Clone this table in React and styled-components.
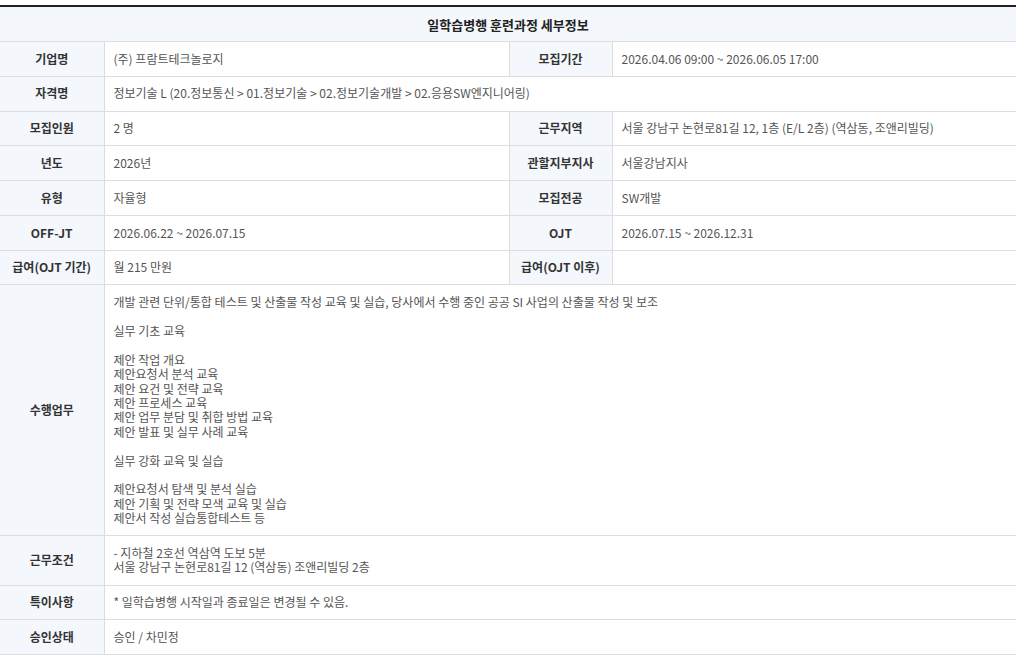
import React from 'react';
import styled, { createGlobalStyle } from 'styled-components';

const GlobalStyle = createGlobalStyle`
  html, body {
    margin: 0;
    padding: 0;
    background: #fff;
  }
  body {
    font-family: "Noto Sans CJK KR", "Noto Sans", sans-serif;
    font-size: 12px;
    color: #555;
  }
`;

const Page = styled.div`
  padding-top: 5px;
  width: 1016px;
`;

const Table = styled.table`
  width: 100%;
  border-collapse: collapse;
  table-layout: fixed;
  border-top: 2px solid #222;
`;

const Caption = styled.th`
  background: #f4f7fc;
  color: #222;
  font-size: 13px;
  font-weight: 700;
  height: 34px;
  padding: 0;
  border-bottom: 1px solid #ddd;
`;

const Label = styled.th`
  background: #f4f7fc;
  color: #333;
  font-weight: 700;
  text-align: center;
  padding: 9.7px 6px;
  line-height: 14.4px;
  border: 1px solid #ddd;
  border-left: none;
`;

const Value = styled.td`
  color: #555;
  padding: 9.7px 9px;
  line-height: 14.4px;
  border: 1px solid #ddd;
  border-right: ${p => (p.$last ? 'none' : '1px solid #ddd')};
  white-space: pre-line;
`;

const rows = [
  ['기업명', '(주) 프람트테크놀로지', '모집기간', '2026.04.06 09:00 ~ 2026.06.05 17:00'],
  ['자격명', '정보기술 L (20.정보통신 > 01.정보기술 > 02.정보기술개발 > 02.응용SW엔지니어링)'],
  ['모집인원', '2 명', '근무지역', '서울 강남구 논현로81길 12, 1층 (E/L 2층) (역삼동, 조앤리빌딩)'],
  ['년도', '2026년', '관할지부지사', '서울강남지사'],
  ['유형', '자율형', '모집전공', 'SW개발'],
  ['OFF-JT', '2026.06.22 ~ 2026.07.15', 'OJT', '2026.07.15 ~ 2026.12.31'],
  ['급여(OJT 기간)', '월 215 만원', '급여(OJT 이후)', ''],
  [
    '수행업무',
    `개발 관련 단위/통합 테스트 및 산출물 작성 교육 및 실습, 당사에서 수행 중인 공공 SI 사업의 산출물 작성 및 보조

실무 기초 교육

제안 작업 개요
제안요청서 분석 교육
제안 요건 및 전략 교육
제안 프로세스 교육
제안 업무 분담 및 취합 방법 교육
제안 발표 및 실무 사례 교육

실무 강화 교육 및 실습

제안요청서 탐색 및 분석 실습
제안 기획 및 전략 모색 교육 및 실습
제안서 작성 실습통합테스트 등`,
  ],
  ['근무조건', `- 지하철 2호선 역삼역 도보 5분
서울 강남구 논현로81길 12 (역삼동) 조앤리빌딩 2층`],
  ['특이사항', '* 일학습병행 시작일과 종료일은 변경될 수 있음.'],
  ['승인상태', '승인 / 차민정'],
];

export default function App() {
  return (
    <Page>
      <GlobalStyle />
      <Table>
        <colgroup>
          <col style={{ width: 104 }} />
          <col style={{ width: 405 }} />
          <col style={{ width: 103 }} />
          <col />
        </colgroup>
        <thead>
          <tr>
            <Caption colSpan={4}>일학습병행 훈련과정 세부정보</Caption>
          </tr>
        </thead>
        <tbody>
          {rows.map(r => (
            <tr key={r[0]}>
              <Label>{r[0]}</Label>
              {r.length === 4 ? (
                <>
                  <Value>{r[1]}</Value>
                  <Label>{r[2]}</Label>
                  <Value $last>{r[3]}</Value>
                </>
              ) : (
                <Value $last colSpan={3}>{r[1]}</Value>
              )}
            </tr>
          ))}
        </tbody>
      </Table>
    </Page>
  );
}
